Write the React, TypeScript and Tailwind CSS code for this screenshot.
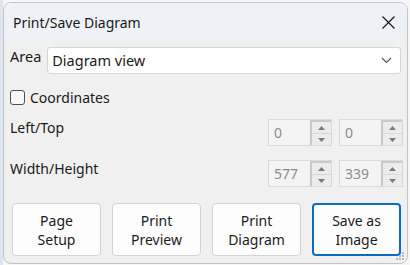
import React from "react";

const font = { fontFamily: '"Noto Sans", "Open Sans", sans-serif' };

function Spinner({ value }: { value: string }) {
  return (
    <div className="flex h-[27px] w-[64px] border border-[#dadada] bg-[#f4f4f4]">
      <div className="flex flex-1 items-center pl-[5px] text-[14px] text-[#8c8c8c]">{value}</div>
      <div className="flex w-[21px] flex-col border-l-2 border-t-2 border-[#c9c9c9] bg-[#f0f0f0]">
        <div className="flex flex-1 items-center justify-center border-b border-[#d8d8d8] bg-[#ececec]">
          <svg width="7" height="4" viewBox="0 0 7 4"><path d="M0 4 L3.5 0 L7 4 Z" fill="#7a7a7a" /></svg>
        </div>
        <div className="flex flex-1 items-center justify-center bg-[#ececec]">
          <svg width="7" height="4" viewBox="0 0 7 4"><path d="M0 0 L3.5 4 L7 0 Z" fill="#7a7a7a" /></svg>
        </div>
      </div>
    </div>
  );
}

function Btn({ a, b, focus }: { a: string; b: string; focus?: boolean }) {
  return (
    <div
      className={
        "flex h-[53px] w-[89px] flex-col items-center justify-center rounded-[4px] bg-[#fdfdfd] text-[14px] leading-[19px] text-[#1b1b1b] " +
        (focus ? "border-2 border-[#0a6cc4]" : "border border-[#d3d3d3]")
      }
    >
      <span>{a}</span>
      <span>{b}</span>
    </div>
  );
}

export default function App() {
  return (
    <div className="relative h-[265px] w-[410px] overflow-hidden bg-[#f7f7f7]" style={font}>
      <div className="pointer-events-none absolute left-[0px] top-[0px] h-[265px] w-[3px] bg-[#dfe6ef]" />
      <div className="absolute left-[3px] top-[2px] flex h-[262px] w-[405px] flex-col overflow-hidden rounded-[8px] border border-[#c4c4c4] bg-[#f0f0f0]">
        {/* title bar */}
        <div className="flex h-[38px] shrink-0 items-center justify-between bg-[#eef2f7] pl-[9px] pr-[12px]">
          <span className="text-[14px] text-[#1a1a1a]">Print/Save Diagram</span>
          <svg width="13" height="13" viewBox="0 0 13 13">
            <path d="M0.5 0.5 L12.5 12.5 M12.5 0.5 L0.5 12.5" stroke="#1a1a1a" strokeWidth="1.2" />
          </svg>
        </div>
        {/* body */}
        <div className="flex flex-1 flex-col px-[6px]">
          <div className="mt-[6px] flex items-start gap-[6px]">
            <span className="mt-[-1px] text-[14.5px] text-[#1a1a1a]">Area</span>
            <div className="flex h-[27px] flex-1 items-center justify-between rounded-[3px] border border-[#d6d6d6] bg-white pl-[4px] pr-[8px]">
              <span className="text-[14.5px] text-[#1a1a1a]">Diagram view</span>
              <svg width="11" height="7" viewBox="0 0 11 7">
                <path d="M1 1 L5.5 5.5 L10 1" stroke="#555" strokeWidth="1.1" fill="none" />
              </svg>
            </div>
          </div>
          <div className="mt-[13px] flex h-[20px] items-center gap-[5px]">
            <div className="h-[15px] w-[15px] rounded-[3px] border border-[#4f4f4f] bg-[#f8f8f8]" />
            <span className="text-[14px] text-[#1a1a1a]">Coordinates</span>
          </div>
          <div className="mt-[12px] flex items-start justify-between">
            <span className="mt-[-2px] text-[14px] text-[#1a1a1a]">Left/Top</span>
            <div className="mr-[-2px] flex gap-[7px]">
              <Spinner value="0" />
              <Spinner value="0" />
            </div>
          </div>
          <div className="mt-[14px] flex items-start justify-between">
            <span className="mt-[-2px] text-[14px] text-[#1a1a1a]">Width/Height</span>
            <div className="mr-[-2px] flex gap-[7px]">
              <Spinner value="577" />
              <Spinner value="339" />
            </div>
          </div>
          <div className="mt-[16px] flex gap-[11px] pl-[2px]">
            <Btn a="Page" b="Setup" />
            <Btn a="Print" b="Preview" />
            <Btn a="Print" b="Diagram" />
            <Btn a="Save as" b="Image" focus />
          </div>
        </div>
        <svg className="absolute bottom-[2px] right-[2px]" width="10" height="10" viewBox="0 0 10 10">
          <rect x="7" y="1" width="2" height="2" fill="#b8b8b8" />
          <rect x="4" y="4" width="2" height="2" fill="#b8b8b8" />
          <rect x="7" y="4" width="2" height="2" fill="#b8b8b8" />
          <rect x="1" y="7" width="2" height="2" fill="#b8b8b8" />
          <rect x="4" y="7" width="2" height="2" fill="#b8b8b8" />
          <rect x="7" y="7" width="2" height="2" fill="#b8b8b8" />
        </svg>
      </div>
    </div>
  );
}
